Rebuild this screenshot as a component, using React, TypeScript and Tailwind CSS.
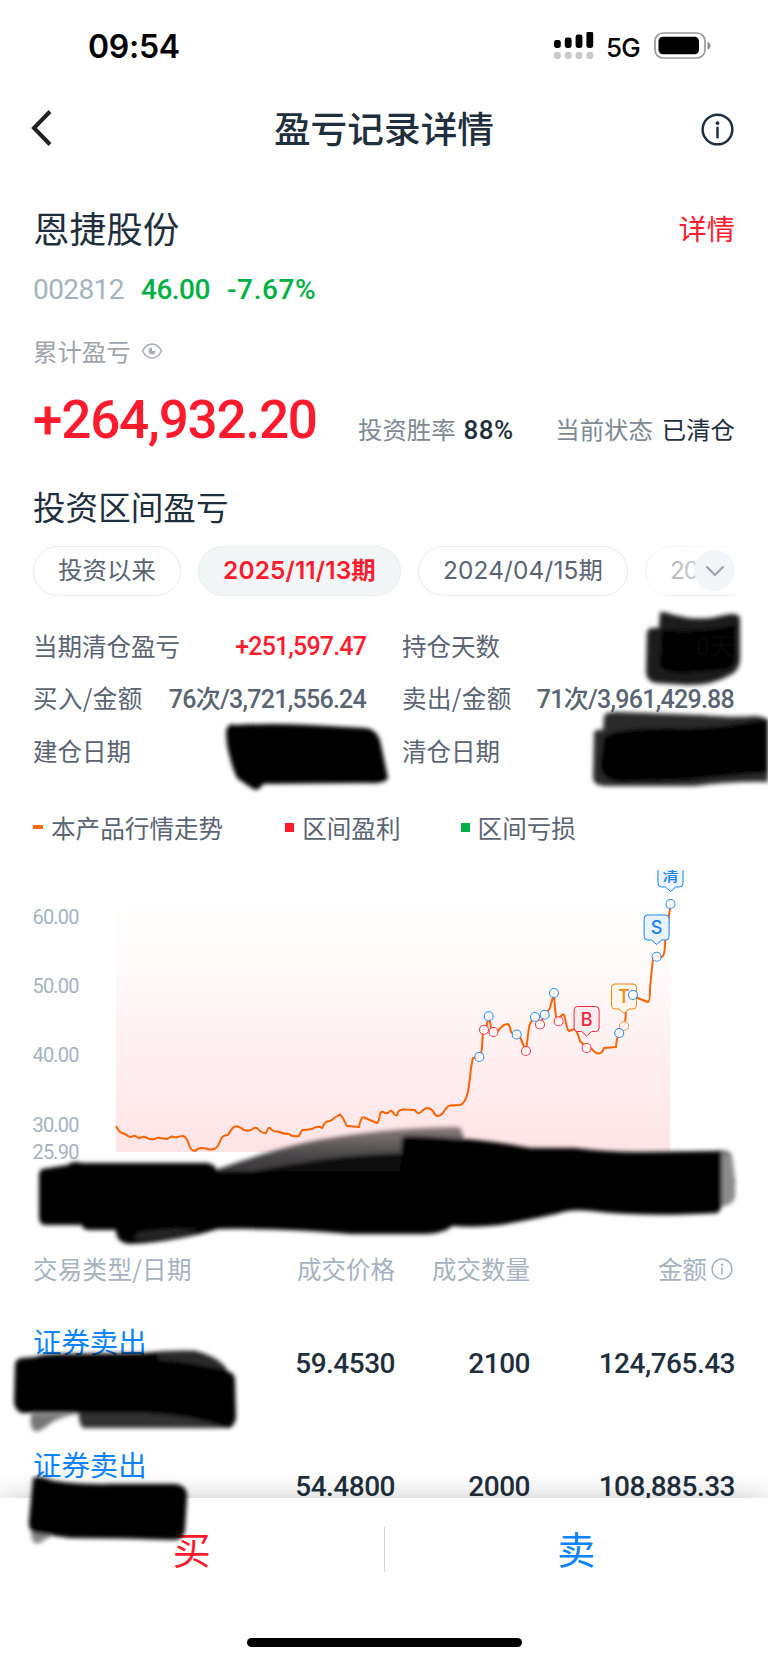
import { ChevronDown } from "lucide-react";

type Point = [number, number];

const PERIODS = ["投资以来", "2025/11/13期", "2024/04/15期"];

const AXIS_LABELS = [
  { label: "60.00", y: 46.5 },
  { label: "50.00", y: 116 },
  { label: "40.00", y: 185 },
  { label: "30.00", y: 254.5 },
  { label: "25.90", y: 282 },
];

const PRICE_LINE =
  "M116 256 Q119 262 122 263 Q126 264 128 266 Q131 268 133 266 Q135 265 137 267 Q139 269 141 267.500 Q145 266 147 268 Q151 270 155 269 Q157 267 160 268 L167 269 Q170 267 172 266.500 L176 267.500 Q180 266 183 266 Q187 267 189 275 Q191 281 195 281 Q198 278 201 278 L206 278.500 Q210 280 214 279 Q218 278 221 269 Q223 265 228 265 Q232 258 234 257 Q237 255 241 258 Q245 262 251 260 Q256 256 258 259 Q261 263 266 263 Q268 257 270 258 Q273 262 278 261.500 Q283 264 289 264 Q292 267 299 266 L302 260 Q307 260 312 259 Q317 255 322 258 Q325 252 327 251.500 Q332 251 334 248 L340 244.500 Q342 246 347 256 L359 257 Q361 246 364 247.500 L377 253 Q379 252 380 244 Q382 240 385 243 Q388 244 390 241 Q392 240 394 244 Q397 248 398 242 Q400 239 405 239.500 L415 240 Q418 246 422 241 Q428 235 433 241 Q437 250 443 243 Q447 236 450 235.500 L460 235 Q465 234 468 222 Q470 210 471 198 L472.500 190 L473 188 L479 187 Q481 186 482 178 L483 160 L486 158 L489 146 L491 158 L494 162 L499 160 Q503 154 508 154 Q510 156 511 162 L515 165 L520 167 L526 181 L529 157 Q531 149 536 148 L540 153 L545 146 L550 138 Q552 130 554 123 Q555 145 557 150 L562 145 Q564 143 565 148 Q567 160 569 161 L575 159 Q578 163 580 171 L586 177 L592 179 Q597 186 602 182 L604 178 L616 177 Q617 165 620 161 L625 154 L626 140 Q629 128 633 126 L640 129 L648 132 Q650 132 650 118 L653 88 L657 86.500 L662 87 Q665 85 665 73 Q667 60 668 54 L670.500 34";

const SELL_DOTS: Point[] = [
  [479.3, 187],
  [488.7, 146.3],
  [516.7, 164.5],
  [535, 147],
  [544.7, 144.7],
  [554, 123],
  [619.2, 163],
  [656.6, 86.7],
  [670.5, 34],
];

const BUY_DOTS: Point[] = [
  [484, 159.7],
  [493.5, 162],
  [526, 181],
  [540, 154.5],
  [558.6, 151.3],
  [586.6, 178],
];

const FLAGS = [
  { text: "清", x: 670.5, y: -8, color: "#1683f5", bg: "#ebf4fe", size: 16 },
  { text: "S", x: 656.6, y: 45, color: "#1683f5", bg: "#e8f3ff", size: 18 },
  { text: "B", x: 586.6, y: 136.5, color: "#ee2740", bg: "#fdecee", size: 18 },
  { text: "T", x: 624, y: 114, color: "#ea8a12", bg: "#fdf5ea", size: 18 },
];

const TRADES = [
  { type: "证券卖出", time: "", price: "59.4530", count: "2100", amount: "124,765.43" },
  { type: "证券卖出", time: "15", price: "54.4800", count: "2000", amount: "108,885.33" },
];

function StatusBar() {
  return (
    <div className="flex h-[92px] items-center pl-[88px] pr-[56px] pt-[2px] font-['Inter',sans-serif] text-black">
      <span className="text-[32px] font-semibold tracking-[-0.3px]">09:54</span>
      <svg className="ml-auto" width="42" height="30" viewBox="0 0 42 30">
        {[8, 10.5, 13.5, 16.5].map((h, i) => (
          <g key={h}>
            <rect x={i * 10.8} y={16 - h} width="6.8" height={h} rx="2.4" />
            <rect x={i * 10.8} y="20" width="6.8" height="7" rx="2.4" fill="#c9c9c9" />
          </g>
        ))}
      </svg>
      <span className="ml-[10px] text-[26px] font-medium tracking-[-0.8px]">5G</span>
      <svg className="mb-[2px] ml-[14px]" width="58" height="28" viewBox="0 0 58 28">
        <rect x="1" y="1" width="50" height="25" rx="8" fill="none" stroke="#999" strokeWidth="1.7" />
        <rect x="4.500" y="4.800" width="40.500" height="17.400" rx="4.500" />
        <path d="M53.500 10 Q56.500 10.500 56.500 13.500 Q56.500 17 53.500 17.500Z" fill="#8c8c8c" />
      </svg>
    </div>
  );
}

function InfoIcon({ size, stroke }: { size: number; stroke: number }) {
  return (
    <svg width={size} height={size} viewBox="0 0 32 32" fill="none" stroke="currentColor" strokeWidth={stroke}>
      <circle cx="16" cy="16" r="14.4" />
      <path d="M16 14.200V23.500" strokeLinecap="round" />
      <circle cx="16" cy="9.800" r="1.900" fill="currentColor" stroke="none" />
    </svg>
  );
}

function Header() {
  return (
    <div className="flex h-[74px] items-center justify-between pl-[30px] pr-[34px] text-[#1f2f3d]">
      <svg width="34" height="42" viewBox="0 0 34 42" fill="none">
        <path d="M20 3.500 L4 20 L20 36.500" stroke="#222" strokeWidth="4" />
      </svg>
      <h1 className="pb-[4px] pl-[3px] text-[36.7px] font-medium leading-none">盈亏记录详情</h1>
      <InfoIcon size={33} stroke={2.4} />
    </div>
  );
}

function Summary() {
  return (
    <div className="px-[33px]">
      <div className="mt-[36px] flex h-[52px] items-center justify-between">
        <h2 className="text-[36.6px] leading-none text-[#1f2f3d]">恩捷股份</h2>
        <span className="text-[28.2px] leading-none text-[#ff1a2e]">详情</span>
      </div>
      <div className="mt-[16px] flex h-10 items-center font-['Roboto',sans-serif] text-[28px] leading-none">
        <span className="w-[108px] tracking-[-0.6px] text-[#a6b2be]">002812</span>
        <span className="w-[86px] font-medium tracking-[-0.5px] text-[#00b045]">46.00</span>
        <span className="font-medium tracking-[0.6px] text-[#00b045]">-7.67%</span>
      </div>
      <div className="mt-[26px] flex h-[30px] items-center text-[24.4px] leading-none text-[#a0a4ac]">
        累计盈亏
        <svg className="ml-[10px]" width="22" height="18" viewBox="0 0 22 18" fill="none">
          <path d="M1.500 9 Q5 2 11 2 T20.500 9 Q17 16 11 16 T1.500 9Z" stroke="#a9adb4" strokeWidth="1.600" />
          <path d="M11 5.500 V9 H14.500 A3.500 3.500 0 1 1 11 5.500Z" fill="#a9adb4" />
        </svg>
      </div>
      <div className="mt-[26px] flex h-14 items-center text-[24.4px] leading-none">
        <span className="w-[325px] font-['Roboto',sans-serif] text-[53px] font-medium tracking-[-1.2px] text-[#ff1a2e]">
          +264,932.20
        </span>
        <span className="flex items-center pt-[18px] text-[#7f8a92]">
          投资胜率
          <b className="ml-2 pt-[2px] font-['Roboto',sans-serif] text-[26px] font-medium tracking-[0.4px] text-[#1f2f3d]">88%</b>
        </span>
        <span className="ml-auto pt-[18px] text-[#7f8a92]">
          当前状态<span className="ml-[9px] text-[#1f2f3d]">已清仓</span>
        </span>
      </div>
    </div>
  );
}

function PeriodTabs() {
  return (
    <div className="mt-[20px] flex h-[50px] px-[33px]">
      <div className="relative flex w-full gap-[17px] overflow-hidden font-['Inter','Noto_Sans_CJK_SC',sans-serif] text-[24.4px] text-[#5a6472]">
        {PERIODS.map((period, i) => (
          <div
            key={period}
            className={
              i === 1
                ? "flex w-[203px] shrink-0 items-center justify-center rounded-full border border-[#e9eced] bg-[#f2f6f7] pb-[2px] font-semibold tracking-[0.15px] text-[#ff1a2e]"
                : i === 0
                  ? "flex w-[148px] shrink-0 items-center justify-center rounded-full border border-[#e9ebed] pb-[2px]"
                  : "flex w-[210px] shrink-0 items-center justify-center rounded-full border border-[#e9ebed] pb-[2px] tracking-[0.15px]"
            }
          >
            {period}
          </div>
        ))}
        <div className="flex w-[210px] shrink-0 items-center rounded-full border border-[#e9ebed] pb-[2px] pl-6 tracking-[-1px]">
          20
        </div>
        <div className="absolute right-0 top-0 h-[49px] w-[90px] bg-linear-to-r from-white/40 to-white/90" />
        <div className="absolute right-0 top-[4px] flex size-[41px] items-center justify-center rounded-full bg-[#f2f6f8] text-[#a0a4aa]">
          <ChevronDown size={32} strokeWidth={1.7} />
        </div>
      </div>
    </div>
  );
}

function Stats() {
  return (
    <div className="mt-[23.5px] grid grid-cols-[333px_332px] gap-x-9 px-[33px] text-[24.5px] leading-none text-[#5a6472]">
      <div className="flex h-[52.5px] items-center justify-between">
        当期清仓盈亏
        <span className="pt-[2px] font-['Roboto',sans-serif] text-[25px] font-medium tracking-[-0.85px] text-[#ff1a2e]">
          +251,597.47
        </span>
      </div>
      <div className="flex h-[52.5px] items-center">持仓天数</div>
      <div className="flex h-[52.5px] items-center justify-between">
        <span className="tracking-[0.4px]">买入/金额</span>
        <span className="pt-[2px] font-['Roboto','Noto_Sans_CJK_SC',sans-serif] text-[25px] font-medium tracking-[-0.75px]">
          76次/3,721,556.24
        </span>
      </div>
      <div className="flex h-[52.5px] items-center justify-between">
        <span className="tracking-[0.4px]">卖出/金额</span>
        <span className="pt-[2px] font-['Roboto','Noto_Sans_CJK_SC',sans-serif] text-[25px] font-medium tracking-[-0.75px]">
          71次/3,961,429.88
        </span>
      </div>
      <div className="flex h-[52.5px] items-center">建仓日期</div>
      <div className="flex h-[52.5px] items-center">清仓日期</div>
    </div>
  );
}

function Legend() {
  return (
    <div className="mt-[35px] flex h-[30px] items-center px-[33px] text-[24.6px] leading-none text-[#5a6472]">
      <i className="mr-2 h-1 w-[10px] bg-[#ff6410]" />
      本产品行情走势
      <i className="ml-[62px] mr-2 size-[9px] bg-[#ff1a2e]" />
      区间盈利
      <i className="ml-[60px] mr-2 size-[9px] bg-[#00b045]" />
      区间亏损
    </div>
  );
}

function Dot({ at, color }: { at: Point; color: string }) {
  return <circle cx={at[0]} cy={at[1]} r="4.500" fill="#fff" fillOpacity="0.85" stroke={color} strokeWidth="1.100" />;
}

function PriceChart() {
  return (
    <svg className="mt-[28px] block" width="768" height="291" viewBox="0 0 768 291">
      <defs>
        <linearGradient id="profit" x1="0" y1="0" x2="0" y2="1">
          <stop offset="0" stopColor="#fffdfd" />
          <stop offset="0.25" stopColor="#fffafa" />
          <stop offset="1" stopColor="#fee4e6" />
        </linearGradient>
      </defs>
      <rect x="116" y="34" width="554" height="248" fill="url(#profit)" />
      {AXIS_LABELS.map(({ label, y }) => (
        <text key={label} x="32.500" y={y + 7.4} textLength="47" className="fill-[#a6b2be] font-['Roboto',sans-serif] text-[20px]">
          {label}
        </text>
      ))}
      <path d={PRICE_LINE} fill="none" stroke="#ff6200" strokeWidth="2" strokeLinejoin="round" />
      {FLAGS.map(({ text, x, y, color, bg, size }) => (
        <g key={text}>
          <path
            d={`M${x - 9} ${y} h18 q3.500 0 3.500 3.500 v18 q0 3.500 -3.500 3.500 h-4 l-5 4.500 l-5 -4.500 h-4 q-3.500 0 -3.500 -3.500 v-18 q0 -3.500 3.500 -3.500Z`}
            fill={bg}
            stroke={color}
            strokeWidth="1"
          />
          <text x={x} y={y + 19} textAnchor="middle" fontSize={size} fill={color} className="font-['Inter','Noto_Sans_CJK_SC',sans-serif] font-medium">
            {text}
          </text>
        </g>
      ))}
      <Dot at={[624, 156]} color="#f59a3c" />
      {BUY_DOTS.map((at) => (
        <Dot key={at[0]} at={at} color="#f5384f" />
      ))}
      {SELL_DOTS.map((at) => (
        <Dot key={at[0]} at={at} color="#2f8ff7" />
      ))}
      <Dot at={[633, 125]} color="#2f8ff7" />
    </svg>
  );
}

function TradeTable() {
  return (
    <div className="px-[33px]">
      <div className="mb-[18px] mt-[93px] grid h-[30px] grid-cols-[1fr_136px_135px_205px] items-center text-right text-[24.5px] leading-none text-[#a6b2be]">
        <span className="text-left tracking-[0.3px]">交易类型/日期</span>
        <span>成交价格</span>
        <span>成交数量</span>
        <span className="flex items-center justify-end gap-1 pr-[2px]">
          金额
          <InfoIcon size={22} stroke={2.2} />
        </span>
      </div>
      {TRADES.map(({ type, time, price, count, amount }) => (
        <div
          key={price}
          className="grid h-[123px] grid-cols-[1fr_136px_135px_205px] items-center text-right font-['Roboto',sans-serif] text-[28px] font-medium leading-none tracking-[-0.5px] text-[#1f2f3d]"
        >
          <div className="h-[84px] text-left font-['Noto_Sans_CJK_SC',sans-serif] text-[28.4px] font-normal tracking-normal text-[#0a84ff]">
            <div className="pt-[5px]">{type}</div>
            <div className="mt-[18px] pl-[168px] font-['Roboto',sans-serif] text-[22px] text-[#7f8d9a]">{time}</div>
          </div>
          <span>{price}</span>
          <span>{count}</span>
          <span>{amount}</span>
        </div>
      ))}
    </div>
  );
}

function TradeFooter() {
  return (
    <div className="relative h-[164px] shrink-0 bg-white shadow-[0_0_26px_rgba(0,0,0,0.22)]">
      <div className="flex h-[106px] items-center text-center text-[38px] leading-none">
        <div className="flex-1 pb-[6px] text-[#ff1a2e]">买</div>
        <div className="mb-[4px] h-[45px] w-px bg-[#d5d8da]" />
        <div className="flex-1 pb-[6px] text-[#0a84ff]">卖</div>
      </div>
      <div className="mx-auto mt-[34px] h-[9px] w-[275px] rounded-full bg-black" />
    </div>
  );
}

// Marker strokes that hide the private dates and amounts.
function Redactions() {
  return (
    <svg className="pointer-events-none absolute left-0 top-0" width="768" height="1662" viewBox="0 0 768 1662">
      <defs>
        <filter id="soft" x="-5%" y="-5%" width="110%" height="110%">
          <feGaussianBlur stdDeviation="1.9" />
        </filter>
        <linearGradient id="sweep" x1="0" y1="0" x2="0" y2="1">
          <stop offset="0" stopColor="#8a7d7e" />
          <stop offset="0.4" stopColor="#484647" />
          <stop offset="1" stopColor="#222" />
        </linearGradient>
      </defs>
      <g filter="url(#soft)">
        <path d="M660 612 Q667 612 674 615 Q700 622 725 615 Q738 612 740 618 V660 Q739 671 730 675 Q714 685 688 685 L656 683 Q646 681 646 672 L647 632 Q648 627 659 628Z" fill="#1f1f1f" />
        <path d="M662 630 Q700 633 735 625 V655 Q735 669 722 670 L682 673 Q662 672 660 665Z" fill="#000" />
        <path d="M235 725 Q228 722 226 732 L227 745 Q231 765 237 778 Q248 786 255 790 Q261 789 263 784 L368 783 Q386 784 388 778 L380 740 Q375 728 365 728 L310 725 Q270 723 235 725Z" fill="#000" />
        <path d="M604 716 Q605 712 617 712 L700 715 Q735 718 755 716 Q766 716 768 722 V782 Q735 781 695 786 L605 786 Q593 785 593 778 L594 733 Q595 729 603 730Z" fill="#292929" />
        <path d="M604 737 Q615 728 670 728 Q710 730 768 719 V773 Q740 774 690 780 L620 782 Q600 779 600 765Z" fill="#000" />
        <path d="M215 1170 Q285 1145 330 1138 Q400 1127 459 1127 Q464 1130 467 1160 L400 1200 L220 1178Z" fill="url(#sweep)" />
        <path d="M250 1172 Q330 1155 400 1153 L410 1180Z" fill="#111" />
        <path d="M42 1169 L68 1165 Q72 1160 82 1163 H207 Q215 1164 217 1171 H400 L402 1137 Q407 1135 420 1136 L465 1139 Q500 1142 530 1148 H575 Q605 1152 640 1152 L715 1151 Q728 1150 731 1154 L735 1180 V1195 Q734 1205 722 1206 L718 1213 Q650 1217 600 1212 Q572 1208 560 1213 Q525 1221 500 1225 Q475 1228 452 1226 Q445 1233 425 1234 H350 Q285 1228 218 1229 L200 1234 Q160 1243 130 1244 Q116 1243 116 1230 H90 Q82 1230 82 1225 H45 Q39 1224 39 1217 V1174 Q40 1170 42 1169Z" fill="#000" />
        <path d="M722 1153 Q731 1152 733 1160 L735 1188 Q735 1203 726 1205 L722 1205Z" fill="#8c8c8c" />
        <path d="M135 1239 Q132 1232 150 1231 Q180 1227 200 1231 Q170 1240 135 1239Z" fill="#262626" />
        <path d="M31 1414 Q29 1434 39 1431 Q46 1427 54 1421 Q64 1416 79 1414Z" fill="#777" />
        <path d="M79 1410 Q78 1423 83 1428 H229 L218 1400 L90 1398Z" fill="#333" />
        <path d="M35 1357 Q42 1354 60 1354 L145 1353 Q170 1350 195 1351 Q222 1358 227 1371 Q235 1373 235 1380 L236 1417 Q235 1426 229 1428 Q190 1415 145 1413 L22 1413 Q15 1411 14 1402 L15 1365 Q15 1359 22 1358Z" fill="#000" />
        <path d="M157 1354 Q195 1347 220 1363 L224 1370 Q185 1361 160 1360Z" fill="#292929" />
        <path d="M31 1529 L32 1540 Q37 1547 44 1540 L52 1536Z" fill="#888" />
        <path d="M33 1478 Q37 1475 54 1481 Q85 1485 110 1484 L175 1484 Q187 1485 187 1496 L185 1530 Q184 1539 175 1540 Q120 1538 70 1538 L34 1533 Q28 1530 29 1520Z" fill="#050505" />
      </g>
      <text x="734" y="655" textAnchor="end" fill="#080808" className="font-['Roboto','Noto_Sans_CJK_SC',sans-serif] text-[24.4px]">
        0天
      </text>
    </svg>
  );
}

function App() {
  return (
    <div className="relative flex h-[1662px] w-[768px] flex-col overflow-hidden bg-white font-['Noto_Sans_CJK_SC',sans-serif]">
      <div className="h-[1498px] shrink-0 overflow-hidden">
        <StatusBar />
        <Header />
        <Summary />
        <h3 className="mt-[38px] h-10 px-[33px] text-[32.6px] leading-10 text-[#1f2f3d]">投资区间盈亏</h3>
        <PeriodTabs />
        <Stats />
        <Legend />
        <PriceChart />
        <TradeTable />
      </div>
      <TradeFooter />
      <Redactions />
    </div>
  );
}

export default App;
